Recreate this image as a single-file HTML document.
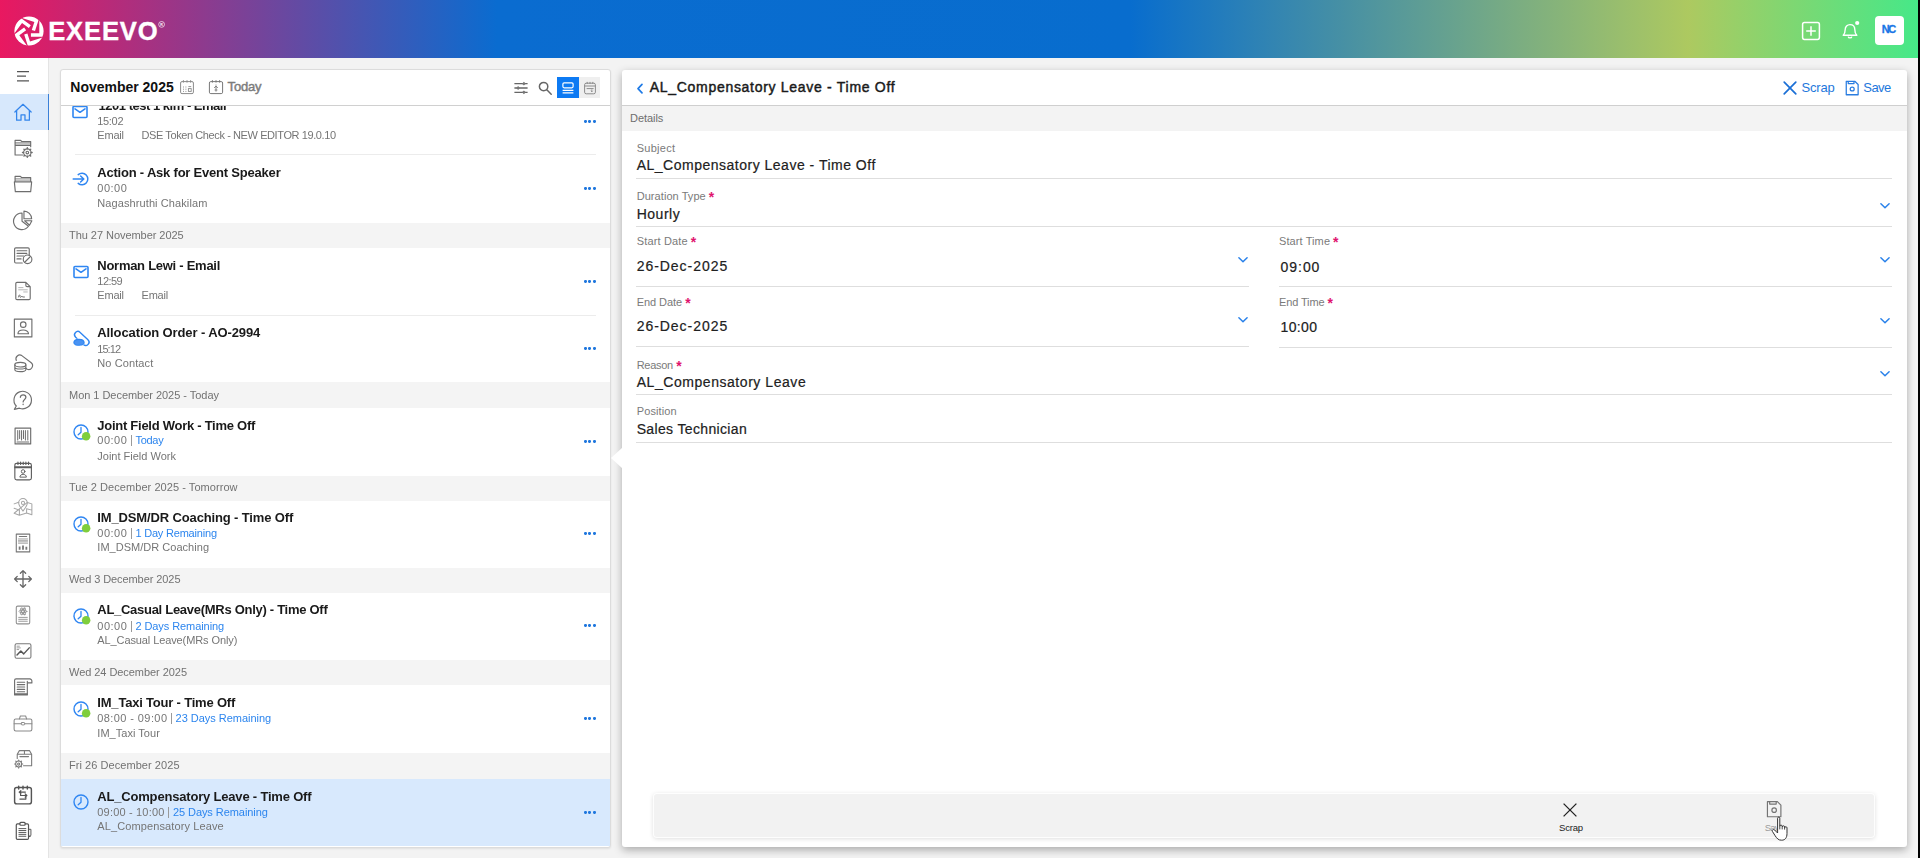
<!DOCTYPE html>
<html><head><meta charset="utf-8"><title>Exeevo</title>
<style>
html,body{margin:0;padding:0;}
body{width:1920px;height:858px;overflow:hidden;background:#f3f3f3;font-family:"Liberation Sans",sans-serif;position:relative;}
.a{position:absolute;}
.t{position:absolute;white-space:pre;}
svg{position:absolute;overflow:visible;}
</style></head><body>
<div class="a" style="left:0;top:0;width:1918px;height:58px;background:linear-gradient(90deg,#e91860 0px,#0a6cd0 497px,#086dce 1130px,#adc960 1688px,#46e888 1918px);"></div>
<div class="a" style="left:1918.00px;top:0.00px;width:2.00px;height:858.00px;background:#000;"></div>
<div class="a" style="left:0.00px;top:58.00px;width:48.00px;height:800.00px;background:#fff;border-right:1px solid #e4e4e4;"></div>
<div class="a" style="left:0.00px;top:94.00px;width:48.00px;height:36.00px;background:#d7e8fc;"></div>
<div class="a" style="left:47.70px;top:94.00px;width:1.50px;height:36.00px;background:#3a80d8;"></div>
<div class="a" style="left:60px;top:69px;width:549px;height:777px;background:#fff;border:1px solid #dcdcdc;border-radius:3px;box-shadow:0 1px 2px rgba(0,0,0,.08);overflow:hidden;"></div>
<div class="a" style="left:61.00px;top:105.00px;width:549.00px;height:1.00px;background:#d0d0d0;"></div>
<div class="a" style="left:622px;top:70px;width:1285px;height:777px;background:#fff;border-radius:3px;box-shadow:0 3px 8px rgba(0,0,0,.30);"></div>
<svg style="left:610px;top:447px" width="13" height="22"><path d="M12.5 0.5 L1 11 L12.5 21.5 Z" fill="#fff"/></svg>
<div class="a" style="left:622.00px;top:105.00px;width:1285.00px;height:1.00px;background:#cfcfcf;"></div>
<div class="a" style="left:622.00px;top:106.00px;width:1285.00px;height:24.50px;background:#f3f3f3;"></div>
<span class="t" style="left:70.30px;top:79.00px;font-size:14.00px;line-height:16px;color:#111;font-weight:bold;letter-spacing:-0.009px;">November 2025</span>
<span class="t" style="left:227.60px;top:79.00px;font-size:13.00px;line-height:15px;color:#7c7c7c;letter-spacing:-0.172px;-webkit-text-stroke:0.45px #7c7c7c;">Today</span>
<div class="a" style="left:557.00px;top:77.00px;width:22.00px;height:21.00px;background:#0d7af3;"></div>
<div class="a" style="left:579.00px;top:77.00px;width:21.00px;height:21.00px;background:#efefef;"></div>
<div class="a" style="left:61px;top:106px;width:549px;height:740px;overflow:hidden;will-change:transform;"><div class="a" style="left:-61px;top:-106px;width:1px;height:1px;">
<span class="t" style="left:98.60px;top:98.00px;font-size:13.00px;line-height:15px;color:#1a1a1a;font-weight:bold;letter-spacing:-0.488px;">1201 test 1 kim - Email</span>
<span class="t" style="left:97.30px;top:115.00px;font-size:11.00px;line-height:12px;color:#757575;letter-spacing:-0.332px;">15:02</span>
<span class="t" style="left:97.30px;top:129.00px;font-size:11.00px;line-height:12px;color:#757575;letter-spacing:-0.201px;">Email</span>
<span class="t" style="left:141.50px;top:129.00px;font-size:11.00px;line-height:12px;color:#757575;letter-spacing:-0.405px;">DSE Token Check - NEW EDITOR 19.0.10</span>
<div class="a" style="left:583.70px;top:120.20px;width:2.90px;height:2.90px;background:#1f77de;border-radius:40%;"></div>
<div class="a" style="left:588.40px;top:120.20px;width:2.90px;height:2.90px;background:#1f77de;border-radius:40%;"></div>
<div class="a" style="left:593.10px;top:120.20px;width:2.90px;height:2.90px;background:#1f77de;border-radius:40%;"></div>
<span class="t" style="left:97.30px;top:165.00px;font-size:13.00px;line-height:15px;color:#1a1a1a;font-weight:bold;letter-spacing:-0.211px;">Action - Ask for Event Speaker</span>
<span class="t" style="left:97.30px;top:182.00px;font-size:11.00px;line-height:12px;color:#757575;letter-spacing:0.493px;">00:00</span>
<span class="t" style="left:97.30px;top:197.00px;font-size:11.00px;line-height:12px;color:#757575;letter-spacing:0.094px;">Nagashruthi Chakilam</span>
<div class="a" style="left:583.70px;top:187.20px;width:2.90px;height:2.90px;background:#1f77de;border-radius:40%;"></div>
<div class="a" style="left:588.40px;top:187.20px;width:2.90px;height:2.90px;background:#1f77de;border-radius:40%;"></div>
<div class="a" style="left:593.10px;top:187.20px;width:2.90px;height:2.90px;background:#1f77de;border-radius:40%;"></div>
<span class="t" style="left:97.30px;top:258.00px;font-size:13.00px;line-height:15px;color:#1a1a1a;font-weight:bold;letter-spacing:-0.270px;">Norman Lewi - Email</span>
<span class="t" style="left:97.30px;top:275.00px;font-size:11.00px;line-height:12px;color:#757575;letter-spacing:-0.532px;">12:59</span>
<span class="t" style="left:97.30px;top:289.00px;font-size:11.00px;line-height:12px;color:#757575;letter-spacing:-0.201px;">Email</span>
<span class="t" style="left:141.50px;top:289.00px;font-size:11.00px;line-height:12px;color:#757575;letter-spacing:-0.201px;">Email</span>
<div class="a" style="left:583.70px;top:280.20px;width:2.90px;height:2.90px;background:#1f77de;border-radius:40%;"></div>
<div class="a" style="left:588.40px;top:280.20px;width:2.90px;height:2.90px;background:#1f77de;border-radius:40%;"></div>
<div class="a" style="left:593.10px;top:280.20px;width:2.90px;height:2.90px;background:#1f77de;border-radius:40%;"></div>
<span class="t" style="left:97.30px;top:325.00px;font-size:13.00px;line-height:15px;color:#1a1a1a;font-weight:bold;letter-spacing:-0.107px;">Allocation Order - AO-2994</span>
<span class="t" style="left:97.30px;top:343.00px;font-size:11.00px;line-height:12px;color:#757575;letter-spacing:-0.957px;">15:12</span>
<span class="t" style="left:97.30px;top:357.00px;font-size:11.00px;line-height:12px;color:#757575;letter-spacing:0.097px;">No Contact</span>
<div class="a" style="left:583.70px;top:347.20px;width:2.90px;height:2.90px;background:#1f77de;border-radius:40%;"></div>
<div class="a" style="left:588.40px;top:347.20px;width:2.90px;height:2.90px;background:#1f77de;border-radius:40%;"></div>
<div class="a" style="left:593.10px;top:347.20px;width:2.90px;height:2.90px;background:#1f77de;border-radius:40%;"></div>
<span class="t" style="left:97.30px;top:418.00px;font-size:13.00px;line-height:15px;color:#1a1a1a;font-weight:bold;letter-spacing:-0.266px;">Joint Field Work - Time Off</span>
<span class="t" style="left:97.30px;top:434.00px;font-size:11.00px;line-height:12px;color:#757575;letter-spacing:0.493px;">00:00</span>
<div class="a" style="left:130.70px;top:434.60px;width:1.10px;height:11.80px;background:#9a9a9a;"></div>
<span class="t" style="left:135.40px;top:434.00px;font-size:11.00px;line-height:12px;color:#2c85ee;letter-spacing:-0.263px;">Today</span>
<span class="t" style="left:97.30px;top:450.00px;font-size:11.00px;line-height:12px;color:#757575;">Joint Field Work</span>
<div class="a" style="left:583.70px;top:440.20px;width:2.90px;height:2.90px;background:#1f77de;border-radius:40%;"></div>
<div class="a" style="left:588.40px;top:440.20px;width:2.90px;height:2.90px;background:#1f77de;border-radius:40%;"></div>
<div class="a" style="left:593.10px;top:440.20px;width:2.90px;height:2.90px;background:#1f77de;border-radius:40%;"></div>
<span class="t" style="left:97.30px;top:510.00px;font-size:13.00px;line-height:15px;color:#1a1a1a;font-weight:bold;letter-spacing:-0.137px;">IM_DSM/DR Coaching - Time Off</span>
<span class="t" style="left:97.30px;top:527.00px;font-size:11.00px;line-height:12px;color:#757575;letter-spacing:0.493px;">00:00</span>
<div class="a" style="left:130.70px;top:527.60px;width:1.10px;height:11.80px;background:#9a9a9a;"></div>
<span class="t" style="left:135.40px;top:527.00px;font-size:11.00px;line-height:12px;color:#2c85ee;letter-spacing:-0.198px;">1 Day Remaining</span>
<span class="t" style="left:97.30px;top:541.00px;font-size:11.00px;line-height:12px;color:#757575;letter-spacing:0.026px;">IM_DSM/DR Coaching</span>
<div class="a" style="left:583.70px;top:532.20px;width:2.90px;height:2.90px;background:#1f77de;border-radius:40%;"></div>
<div class="a" style="left:588.40px;top:532.20px;width:2.90px;height:2.90px;background:#1f77de;border-radius:40%;"></div>
<div class="a" style="left:593.10px;top:532.20px;width:2.90px;height:2.90px;background:#1f77de;border-radius:40%;"></div>
<span class="t" style="left:97.30px;top:602.00px;font-size:13.00px;line-height:15px;color:#1a1a1a;font-weight:bold;letter-spacing:-0.283px;">AL_Casual Leave(MRs Only) - Time Off</span>
<span class="t" style="left:97.30px;top:620.00px;font-size:11.00px;line-height:12px;color:#757575;letter-spacing:0.493px;">00:00</span>
<div class="a" style="left:130.70px;top:620.60px;width:1.10px;height:11.80px;background:#9a9a9a;"></div>
<span class="t" style="left:135.40px;top:620.00px;font-size:11.00px;line-height:12px;color:#2c85ee;letter-spacing:-0.072px;">2 Days Remaining</span>
<span class="t" style="left:97.30px;top:634.00px;font-size:11.00px;line-height:12px;color:#757575;letter-spacing:-0.102px;">AL_Casual Leave(MRs Only)</span>
<div class="a" style="left:583.70px;top:624.20px;width:2.90px;height:2.90px;background:#1f77de;border-radius:40%;"></div>
<div class="a" style="left:588.40px;top:624.20px;width:2.90px;height:2.90px;background:#1f77de;border-radius:40%;"></div>
<div class="a" style="left:593.10px;top:624.20px;width:2.90px;height:2.90px;background:#1f77de;border-radius:40%;"></div>
<span class="t" style="left:97.30px;top:695.00px;font-size:13.00px;line-height:15px;color:#1a1a1a;font-weight:bold;letter-spacing:-0.195px;">IM_Taxi Tour - Time Off</span>
<span class="t" style="left:97.30px;top:712.00px;font-size:11.00px;line-height:12px;color:#757575;letter-spacing:0.406px;">08:00 - 09:00</span>
<div class="a" style="left:170.90px;top:712.60px;width:1.10px;height:11.80px;background:#9a9a9a;"></div>
<span class="t" style="left:175.60px;top:712.00px;font-size:11.00px;line-height:12px;color:#2c85ee;letter-spacing:-0.031px;">23 Days Remaining</span>
<span class="t" style="left:97.30px;top:727.00px;font-size:11.00px;line-height:12px;color:#757575;letter-spacing:0.031px;">IM_Taxi Tour</span>
<div class="a" style="left:583.70px;top:717.20px;width:2.90px;height:2.90px;background:#1f77de;border-radius:40%;"></div>
<div class="a" style="left:588.40px;top:717.20px;width:2.90px;height:2.90px;background:#1f77de;border-radius:40%;"></div>
<div class="a" style="left:593.10px;top:717.20px;width:2.90px;height:2.90px;background:#1f77de;border-radius:40%;"></div>
<div class="a" style="left:61.00px;top:778.80px;width:549.00px;height:68.00px;background:#d8e9fd;"></div>
<span class="t" style="left:97.30px;top:789.00px;font-size:13.00px;line-height:15px;color:#1a1a1a;font-weight:bold;letter-spacing:-0.187px;">AL_Compensatory Leave - Time Off</span>
<span class="t" style="left:97.30px;top:806.00px;font-size:11.00px;line-height:12px;color:#757575;letter-spacing:0.181px;">09:00 - 10:00</span>
<div class="a" style="left:168.20px;top:806.60px;width:1.10px;height:11.80px;background:#9a9a9a;"></div>
<span class="t" style="left:172.90px;top:806.00px;font-size:11.00px;line-height:12px;color:#2c85ee;letter-spacing:-0.062px;">25 Days Remaining</span>
<span class="t" style="left:97.30px;top:820.00px;font-size:11.00px;line-height:12px;color:#757575;letter-spacing:0.113px;">AL_Compensatory Leave</span>
<div class="a" style="left:583.70px;top:811.20px;width:2.90px;height:2.90px;background:#1f77de;border-radius:40%;"></div>
<div class="a" style="left:588.40px;top:811.20px;width:2.90px;height:2.90px;background:#1f77de;border-radius:40%;"></div>
<div class="a" style="left:593.10px;top:811.20px;width:2.90px;height:2.90px;background:#1f77de;border-radius:40%;"></div>
<div class="a" style="left:61.00px;top:222.60px;width:549.00px;height:25.40px;background:#f4f4f4;"></div>
<span class="t" style="left:69.00px;top:229.00px;font-size:11.00px;line-height:12px;color:#727272;letter-spacing:-0.046px;">Thu 27 November 2025</span>
<div class="a" style="left:61.00px;top:382.40px;width:549.00px;height:25.70px;background:#f4f4f4;"></div>
<span class="t" style="left:69.00px;top:389.00px;font-size:11.00px;line-height:12px;color:#727272;letter-spacing:-0.032px;">Mon 1 December 2025 - Today</span>
<div class="a" style="left:61.00px;top:475.80px;width:549.00px;height:24.80px;background:#f4f4f4;"></div>
<span class="t" style="left:69.00px;top:481.00px;font-size:11.00px;line-height:12px;color:#727272;letter-spacing:0.055px;">Tue 2 December 2025 - Tomorrow</span>
<div class="a" style="left:61.00px;top:567.50px;width:549.00px;height:25.30px;background:#f4f4f4;"></div>
<span class="t" style="left:69.00px;top:573.00px;font-size:11.00px;line-height:12px;color:#727272;letter-spacing:-0.079px;">Wed 3 December 2025</span>
<div class="a" style="left:61.00px;top:660.20px;width:549.00px;height:25.20px;background:#f4f4f4;"></div>
<span class="t" style="left:69.00px;top:666.00px;font-size:11.00px;line-height:12px;color:#727272;letter-spacing:-0.054px;">Wed 24 December 2025</span>
<div class="a" style="left:61.00px;top:752.60px;width:549.00px;height:26.30px;background:#f4f4f4;"></div>
<span class="t" style="left:69.00px;top:759.00px;font-size:11.00px;line-height:12px;color:#727272;letter-spacing:0.056px;">Fri 26 December 2025</span>
<div class="a" style="left:75.00px;top:154.00px;width:521.00px;height:1.00px;background:#ececec;"></div>
<div class="a" style="left:75.00px;top:315.00px;width:521.00px;height:1.00px;background:#ececec;"></div>
</div></div>
<span class="t" style="left:649.70px;top:79.00px;font-size:14.00px;line-height:16px;color:#1a1a1a;letter-spacing:0.707px;-webkit-text-stroke:0.45px #1a1a1a;">AL_Compensatory Leave - Time Off</span>
<span class="t" style="left:1801.50px;top:80.00px;font-size:13.00px;line-height:15px;color:#1e78dc;letter-spacing:-0.190px;">Scrap</span>
<span class="t" style="left:1863.30px;top:80.00px;font-size:13.00px;line-height:15px;color:#1e78dc;letter-spacing:-0.544px;">Save</span>
<span class="t" style="left:630.00px;top:112.00px;font-size:11.00px;line-height:12px;color:#6e6e6e;letter-spacing:-0.054px;">Details</span>
<span class="t" style="left:636.70px;top:142.00px;font-size:11.00px;line-height:12px;color:#7a7a7a;letter-spacing:0.268px;">Subject</span>
<span class="t" style="left:636.70px;top:157.00px;font-size:14.00px;line-height:16px;color:#212121;letter-spacing:0.501px;-webkit-text-stroke:0.2px #212121;">AL_Compensatory Leave - Time Off</span>
<span class="t" style="left:636.70px;top:190.00px;font-size:11.00px;line-height:12px;color:#7a7a7a;letter-spacing:0.060px;">Duration Type</span>
<span class="t" style="left:708.70px;top:189.00px;font-size:14.00px;line-height:16px;color:#e0146e;font-weight:bold;">*</span>
<span class="t" style="left:636.70px;top:206.00px;font-size:14.00px;line-height:16px;color:#212121;letter-spacing:0.509px;-webkit-text-stroke:0.2px #212121;">Hourly</span>
<span class="t" style="left:636.70px;top:235.00px;font-size:11.00px;line-height:12px;color:#7a7a7a;letter-spacing:0.164px;">Start Date</span>
<span class="t" style="left:690.70px;top:234.00px;font-size:14.00px;line-height:16px;color:#e0146e;font-weight:bold;">*</span>
<span class="t" style="left:636.70px;top:258.00px;font-size:14.00px;line-height:16px;color:#212121;letter-spacing:0.956px;-webkit-text-stroke:0.2px #212121;">26-Dec-2025</span>
<span class="t" style="left:1279.00px;top:235.00px;font-size:11.00px;line-height:12px;color:#7a7a7a;letter-spacing:0.097px;">Start Time</span>
<span class="t" style="left:1333.00px;top:234.00px;font-size:14.00px;line-height:16px;color:#e0146e;font-weight:bold;">*</span>
<span class="t" style="left:1280.60px;top:259.00px;font-size:14.00px;line-height:16px;color:#212121;letter-spacing:0.941px;-webkit-text-stroke:0.2px #212121;">09:00</span>
<span class="t" style="left:636.70px;top:296.00px;font-size:11.00px;line-height:12px;color:#7a7a7a;letter-spacing:-0.052px;">End Date</span>
<span class="t" style="left:685.20px;top:295.00px;font-size:14.00px;line-height:16px;color:#e0146e;font-weight:bold;">*</span>
<span class="t" style="left:636.70px;top:318.00px;font-size:14.00px;line-height:16px;color:#212121;letter-spacing:0.956px;-webkit-text-stroke:0.2px #212121;">26-Dec-2025</span>
<span class="t" style="left:1279.00px;top:296.00px;font-size:11.00px;line-height:12px;color:#7a7a7a;letter-spacing:-0.124px;">End Time</span>
<span class="t" style="left:1327.60px;top:295.00px;font-size:14.00px;line-height:16px;color:#e0146e;font-weight:bold;">*</span>
<span class="t" style="left:1280.60px;top:319.00px;font-size:14.00px;line-height:16px;color:#212121;letter-spacing:0.341px;-webkit-text-stroke:0.2px #212121;">10:00</span>
<span class="t" style="left:636.70px;top:359.00px;font-size:11.00px;line-height:12px;color:#7a7a7a;letter-spacing:-0.283px;">Reason</span>
<span class="t" style="left:676.20px;top:358.00px;font-size:14.00px;line-height:16px;color:#e0146e;font-weight:bold;">*</span>
<span class="t" style="left:636.70px;top:374.00px;font-size:14.00px;line-height:16px;color:#212121;letter-spacing:0.551px;-webkit-text-stroke:0.2px #212121;">AL_Compensatory Leave</span>
<span class="t" style="left:636.70px;top:405.00px;font-size:11.00px;line-height:12px;color:#7a7a7a;letter-spacing:0.124px;">Position</span>
<span class="t" style="left:636.70px;top:421.00px;font-size:14.00px;line-height:16px;color:#212121;letter-spacing:0.346px;-webkit-text-stroke:0.2px #212121;">Sales Technician</span>
<div class="a" style="left:636.00px;top:178.00px;width:1256.00px;height:1.00px;background:#dedede;"></div>
<div class="a" style="left:636.00px;top:226.00px;width:1256.00px;height:1.00px;background:#dedede;"></div>
<div class="a" style="left:636.00px;top:286.00px;width:613.00px;height:1.00px;background:#dedede;"></div>
<div class="a" style="left:1279.00px;top:286.00px;width:613.00px;height:1.00px;background:#dedede;"></div>
<div class="a" style="left:636.00px;top:346.00px;width:613.00px;height:1.00px;background:#dedede;"></div>
<div class="a" style="left:1279.00px;top:346.50px;width:613.00px;height:1.00px;background:#dedede;"></div>
<div class="a" style="left:636.00px;top:394.00px;width:1256.00px;height:1.00px;background:#dedede;"></div>
<div class="a" style="left:636.00px;top:442.00px;width:1256.00px;height:1.00px;background:#dedede;"></div>
<svg style="left:1879.10px;top:202.30px" width="12" height="8"><path d="M1.9 1.7 L6 5.7 L10.1 1.7" fill="none" stroke="#2a82ea" stroke-width="1.5" stroke-linecap="round" stroke-linejoin="round"/></svg>
<svg style="left:1237.00px;top:256.20px" width="12" height="8"><path d="M1.9 1.7 L6 5.7 L10.1 1.7" fill="none" stroke="#2a82ea" stroke-width="1.5" stroke-linecap="round" stroke-linejoin="round"/></svg>
<svg style="left:1879.10px;top:256.20px" width="12" height="8"><path d="M1.9 1.7 L6 5.7 L10.1 1.7" fill="none" stroke="#2a82ea" stroke-width="1.5" stroke-linecap="round" stroke-linejoin="round"/></svg>
<svg style="left:1237.00px;top:316.20px" width="12" height="8"><path d="M1.9 1.7 L6 5.7 L10.1 1.7" fill="none" stroke="#2a82ea" stroke-width="1.5" stroke-linecap="round" stroke-linejoin="round"/></svg>
<svg style="left:1879.10px;top:316.80px" width="12" height="8"><path d="M1.9 1.7 L6 5.7 L10.1 1.7" fill="none" stroke="#2a82ea" stroke-width="1.5" stroke-linecap="round" stroke-linejoin="round"/></svg>
<svg style="left:1879.10px;top:370.40px" width="12" height="8"><path d="M1.9 1.7 L6 5.7 L10.1 1.7" fill="none" stroke="#2a82ea" stroke-width="1.5" stroke-linecap="round" stroke-linejoin="round"/></svg>
<div class="a" style="left:654px;top:793.5px;width:1220px;height:43.5px;background:#f2f2f2;border-radius:3px;box-shadow:0 0 0 1px rgba(255,255,255,.9),0 1px 4px 1px rgba(0,0,0,.13);"></div>
<span class="t" style="left:1559.00px;top:822.00px;font-size:9.50px;line-height:11px;color:#222;letter-spacing:-0.204px;">Scrap</span>
<span class="t" style="left:1764.80px;top:822.00px;font-size:9.50px;line-height:11px;color:#9a9a9a;letter-spacing:-0.884px;">Save</span>
<svg style="left:12.60px;top:14.50px" width="32" height="32" viewBox="-16 -16 32 32"><defs><clipPath id="lc"><circle cx="0" cy="0" r="14.6"/></clipPath></defs><g clip-path="url(#lc)" fill="#fff"><path transform="rotate(0)" d="M10.3 -14 H15 V5.7 H1.9 V2.3 H10.3 Z"/><path transform="rotate(72)" d="M10.3 -14 H15 V5.7 H1.9 V2.3 H10.3 Z"/><path transform="rotate(144)" d="M10.3 -14 H15 V5.7 H1.9 V2.3 H10.3 Z"/><path transform="rotate(216)" d="M10.3 -14 H15 V5.7 H1.9 V2.3 H10.3 Z"/><path transform="rotate(288)" d="M10.3 -14 H15 V5.7 H1.9 V2.3 H10.3 Z"/></g></svg>
<span class="t" style="left:48.20px;top:17.00px;font-size:25.60px;line-height:28px;color:#fff;font-weight:bold;letter-spacing:0.848px;-webkit-text-stroke:0.35px #fff;">EXEEVO</span>
<svg style="left:158.2px;top:21.4px" width="8" height="8" viewBox="0 0 8 8"><circle cx="3.6" cy="3.4" r="2.9" fill="none" stroke="#fff" stroke-width="0.8" opacity=".85"/><text x="3.6" y="5" font-size="3.6" text-anchor="middle" fill="#fff" font-family="Liberation Sans" font-weight="bold">R</text></svg>
<svg style="left:1800.80px;top:20.50px;" width="20" height="20" viewBox="0 0 20 20"><rect x="1.6" y="1.6" width="16.8" height="16.8" rx="1.8" fill="none" stroke="#fff" stroke-width="1.5"/><path d="M10 5.2 V14.8 M5.2 10 H14.8" stroke="#fff" stroke-width="1.5"/></svg>
<svg style="left:1839.50px;top:20.50px;" width="20" height="20" viewBox="0 0 20 20"><path d="M3.2 14.2 C5 12.6 5.2 11 5.2 8.6 C5.2 5.6 7.2 3.6 10 3.6 C12.8 3.6 14.8 5.6 14.8 8.6 C14.8 11 15 12.6 16.8 14.2 Z" fill="none" stroke="#fff" stroke-width="1.4" stroke-linejoin="round"/><path d="M8.2 15.6 C8.4 17.4 11.6 17.4 11.8 15.6" fill="none" stroke="#fff" stroke-width="1.3"/><circle cx="17.2" cy="2" r="2.1" fill="#fff"/></svg>
<div class="a" style="left:1875.00px;top:16.20px;width:28.80px;height:28.60px;background:#fff;border-radius:4px;"></div>
<span class="t" style="left:1881.80px;top:23.00px;font-size:11.00px;line-height:12px;color:#1a76e6;font-weight:bold;letter-spacing:-1.488px;-webkit-text-stroke:0.3px #1a76e6;">NC</span>
<svg style="left:16px;top:70px" width="16" height="13"><path d="M1 1.6 H13 M1 6.2 H10 M1 10.8 H13" stroke="#555" stroke-width="1.2" fill="none"/></svg>
<svg style="left:12.20px;top:100.90px" width="22" height="22" viewBox="0 0 20 20"><g fill="none" stroke="#3385ec" stroke-width="1.15" stroke-linecap="round" stroke-linejoin="round"><path d="M2.6 10.0 L10 3 L17.4 10.0 M4.2 8.6 V17.4 H8.2 V12.6 H11.8 V17.4 H15.8 V8.6"/></g></svg>
<svg style="left:11.20px;top:135.80px" width="24" height="24" viewBox="0 0 20 20"><g fill="none" stroke="#6e6e6e" stroke-width="0.95" stroke-linecap="round" stroke-linejoin="round"><path d="M3.4 5 V3.6 H8 L9 4.6 H16.4 V9 M3.4 5 V15.8 H9.6 M3.4 7.8 H16.4"/><path d="M3.6 5.5 H16.2 M3.6 6.6 H16.2" stroke-width=".55"/><circle cx="13.6" cy="13.8" r="3.1"/><circle cx="13.6" cy="13.8" r="1.1"/><path d="M13.6 9.8 V10.7 M13.6 16.9 V17.8 M9.6 13.8 H10.5 M16.7 13.8 H17.6 M10.8 11 L11.4 11.6 M15.8 16 L16.4 16.6 M16.4 11 L15.8 11.6 M11.4 16 L10.8 16.6" stroke-width="1.2"/></g></svg>
<svg style="left:11.20px;top:172.00px" width="24" height="24" viewBox="0 0 20 20"><g fill="none" stroke="#6e6e6e" stroke-width="0.95" stroke-linecap="round" stroke-linejoin="round"><path d="M3.4 7.4 V3.6 H7.8 L8.8 4.6 H16.4 V7.4 M2.8 8.2 H17.2 L16.4 16.4 H3.6 Z"/><path d="M3.6 5.6 H16.2 M3.6 6.8 H16.2" stroke-width=".55"/></g></svg>
<svg style="left:11.20px;top:208.40px" width="24" height="24" viewBox="0 0 20 20"><g fill="none" stroke="#6e6e6e" stroke-width="0.95" stroke-linecap="round" stroke-linejoin="round"><path d="M9.2 4.2 A6.9 6.9 0 1 0 14.6 15.2 L9.2 11.1 Z"/><path d="M10.8 2.6 A6.6 6.6 0 0 1 17.2 9 H10.8 Z"/><path d="M11.4 10.6 H17.4 L15.4 14.4 Z"/></g></svg>
<svg style="left:11.20px;top:243.60px" width="24" height="24" viewBox="0 0 20 20"><g fill="none" stroke="#6e6e6e" stroke-width="0.95" stroke-linecap="round" stroke-linejoin="round"><path d="M15.2 9.6 V4.2 Q15.2 3.2 14.2 3.2 H4 Q3 3.2 3 4.2 V14.8 Q3 15.8 4 15.8 H9.4"/><path d="M5 5.6 H13.2 M5 7.8 H13.2 M5 10 H10.6 M5 12.4 H8.4"/><circle cx="13.8" cy="12.8" r="3.6"/><path d="M11.4 15.2 L16.2 10.4"/></g></svg>
<svg style="left:11.20px;top:279.40px" width="24" height="24" viewBox="0 0 20 20"><g fill="none" stroke="#6e6e6e" stroke-width="0.95" stroke-linecap="round" stroke-linejoin="round"><path d="M5 2.8 H12.4 L16 6.4 V16.2 Q16 17.2 15 17.2 H5 Q4 17.2 4 16.2 V3.8 Q4 2.8 5 2.8 Z M12.4 2.8 V5.4 Q12.4 6.4 13.4 6.4 H16"/><path d="M6.4 7.2 H10 M6.4 9 H13.6 M10.6 10.8 H13.6" stroke-width=".6" stroke="#999"/><path d="M6.2 15 C6.6 12.6 8 12.8 7.4 14.4 C7 15.6 8.6 15.4 9 14.2 L9.6 15 H11.2" stroke-width=".8"/></g></svg>
<svg style="left:11.20px;top:315.60px" width="24" height="24" viewBox="0 0 20 20"><g fill="none" stroke="#6e6e6e" stroke-width="0.95" stroke-linecap="round" stroke-linejoin="round"><rect x="2.8" y="2.6" width="14.6" height="14.8"/><circle cx="10.2" cy="7.2" r="2.3"/><path d="M5.8 14.8 C5.8 10.6 14.6 10.6 14.6 14.8 Z"/></g></svg>
<svg style="left:11.20px;top:351.60px" width="24" height="24" viewBox="0 0 20 20"><g fill="none" stroke="#6e6e6e" stroke-width="0.95" stroke-linecap="round" stroke-linejoin="round"><path d="M4.4 7 A3.2 3.2 0 0 1 9 3 L16.6 8.8 A3.2 3.2 0 0 1 13.2 14.2 L12.4 13.6"/><ellipse cx="7.8" cy="10.6" rx="4.6" ry="1.9"/><path d="M3.2 10.6 V14.6 C3.2 17 12.4 17 12.4 14.6 V10.6 M3.2 12.4 C3.2 14.8 12.4 14.8 12.4 12.4"/></g></svg>
<svg style="left:11.20px;top:387.60px" width="24" height="24" viewBox="0 0 20 20"><g fill="none" stroke="#6e6e6e" stroke-width="0.95" stroke-linecap="round" stroke-linejoin="round"><path d="M4.4 15 A7.3 7.3 0 1 1 7 16.8 L2.8 17.8 Z"/><path d="M7.8 7.8 C7.8 5 12.4 5 12.4 7.8 C12.4 9.6 10.1 9.4 10.1 11.6 M10.1 13.4 V13.8" stroke-width="1.05"/></g></svg>
<svg style="left:11.20px;top:423.80px" width="24" height="24" viewBox="0 0 20 20"><g fill="none" stroke="#6e6e6e" stroke-width="0.95" stroke-linecap="round" stroke-linejoin="round"><rect x="3.4" y="3.4" width="13" height="13.2"/><path d="M5.6 5.4 V13.4 M7.2 5.4 V12 M8.8 5.4 V13.4 M10.4 5.4 V12 M12 5.4 V13.4 M14 5.4 V13.4 M5 15 H14.8" stroke-width=".85"/></g></svg>
<svg style="left:11.20px;top:459.20px" width="24" height="24" viewBox="0 0 20 20"><g fill="none" stroke="#5e5e5e" stroke-width="0.95" stroke-linecap="round" stroke-linejoin="round"><rect x="3.2" y="3.6" width="13.8" height="13.8" rx="1.6"/><path d="M3.2 6.6 H17 M3.2 7.2 H17 M5.8 2.6 V4.6 M8 2.6 V4.6 M10.2 2.6 V4.6 M12.4 2.6 V4.6 M14.6 2.6 V4.6"/><circle cx="10.1" cy="10.4" r="1.5" stroke-width=".8"/><path d="M7.4 14.8 C7.4 12 12.8 12 12.8 14.8 Z" stroke-width=".8"/></g></svg>
<svg style="left:11.20px;top:495.20px" width="24" height="24" viewBox="0 0 20 20"><g fill="none" stroke="#a6a6a6" stroke-width="0.85" stroke-linecap="round" stroke-linejoin="round"><path d="M2.6 7.4 L6.4 6 M13.6 6.2 L17.4 7.4 V16.4 L13 15 L7 16.8 L2.6 15.2 Z M7 12 V16.8 M13 12 V15 M2.6 11 L7 12.6 M13 11.4 L17.4 12.6"/><path d="M10 13.4 C7.4 10 6.4 8.6 6.4 6.6 A3.6 3.6 0 0 1 13.6 6.6 C13.6 8.6 12.6 10 10 13.4 Z"/><circle cx="10" cy="6.6" r="1.3"/></g></svg>
<svg style="left:11.20px;top:531.30px" width="24" height="24" viewBox="0 0 20 20"><g fill="none" stroke="#777" stroke-width="0.9" stroke-linecap="round" stroke-linejoin="round"><rect x="4.4" y="2.6" width="11.2" height="14.8"/><path d="M7 4.6 H13" stroke-width="1"/><path d="M6.2 6.6 H13.8 M6.2 7.8 H13.8 M6.2 9 H13.8 M6.2 10.2 H13.8" stroke-width=".6" stroke="#888"/><path d="M7.2 15.6 V13 M10 15.6 V12 M12.8 15.6 V13.2" stroke-width="1.5" stroke-linecap="butt"/></g></svg>
<svg style="left:11.20px;top:567.20px" width="24" height="24" viewBox="0 0 20 20"><g fill="none" stroke="#666" stroke-width="1.1" stroke-linecap="round" stroke-linejoin="round"><path d="M10 3 V17 M3 10 H17 M7.8 5.2 L10 3 L12.2 5.2 M7.8 14.8 L10 17 L12.2 14.8 M5.2 7.8 L3 10 L5.2 12.2 M14.8 7.8 L17 10 L14.8 12.2"/></g></svg>
<svg style="left:11.20px;top:603.00px" width="24" height="24" viewBox="0 0 20 20"><g fill="none" stroke="#909090" stroke-width="0.9" stroke-linecap="round" stroke-linejoin="round"><rect x="4.4" y="2.6" width="11.2" height="14.8" rx="1.2"/><circle cx="10" cy="7" r="1.1" stroke-width=".7"/><ellipse cx="10" cy="7" rx="3.3" ry="1.4" stroke-width=".7"/><ellipse cx="10" cy="7" rx="3.3" ry="1.4" transform="rotate(60 10 7)" stroke-width=".7"/><ellipse cx="10" cy="7" rx="3.3" ry="1.4" transform="rotate(-60 10 7)" stroke-width=".7"/><path d="M6.4 12 H13.6 M6.4 13.6 H13.6 M6.4 15.2 H13.6" stroke-width=".75"/></g></svg>
<svg style="left:11.20px;top:639.20px" width="24" height="24" viewBox="0 0 20 20"><g fill="none" stroke="#7a7a7a" stroke-width="0.9" stroke-linecap="round" stroke-linejoin="round"><rect x="3.4" y="4" width="13.2" height="12" rx="1.2"/><path d="M5 13.4 L8.2 10 L10.6 12.4 L15.2 7.4" stroke="#555" stroke-width="1.2"/><path d="M5 6 H7 M5 7.4 H7.8 M5 8.8 H6.4" stroke-width=".6"/></g></svg>
<svg style="left:11.20px;top:675.00px" width="24" height="24" viewBox="0 0 20 20"><g fill="none" stroke="#6e6e6e" stroke-width="0.95" stroke-linecap="round" stroke-linejoin="round"><path d="M13.6 5.2 V16.6 H3 V4.4 Q3 3.2 4.2 3.2 H15.6 A1.9 1.9 0 0 1 17.4 5.2 V6.6 H13.6"/><path d="M3.2 16 H13.4" stroke-width="1.4"/><path d="M5.2 6 H11.4 M5.2 8 H11.4 M5.2 10 H11.4 M5.2 12 H11.4 M5.2 14 H11.4" stroke-width=".9"/></g></svg>
<svg style="left:11.20px;top:710.60px" width="24" height="24" viewBox="0 0 20 20"><g fill="none" stroke="#8a8a8a" stroke-width="0.9" stroke-linecap="round" stroke-linejoin="round"><rect x="2.6" y="6.6" width="14.8" height="10" rx="1.4"/><path d="M7 6.6 L7.8 4.2 H12.2 L13 6.6 M2.6 10.6 H8.6 M11.4 10.6 H17.4"/><rect x="8.6" y="9.6" width="2.8" height="2" rx=".6" stroke-width=".8"/></g></svg>
<svg style="left:11.20px;top:746.80px" width="24" height="24" viewBox="0 0 20 20"><g fill="none" stroke="#7a7a7a" stroke-width="0.9" stroke-linecap="round" stroke-linejoin="round"><path d="M5.2 9.6 V6 L7 3 H15.4 L17.2 6 V15.6 H10.4 M5.2 6 H17.2 M11.2 3 V6 M7.4 8 H14.6"/><circle cx="6.4" cy="14.2" r="2.5"/><circle cx="6.4" cy="14.2" r=".9"/><path d="M6.4 10.8 V11.5 M6.4 16.9 V17.6 M3 14.2 H3.7 M9.1 14.2 H9.8 M4 11.8 L4.5 12.3 M8.3 16.1 L8.8 16.6 M8.8 11.8 L8.3 12.3 M4.5 16.1 L4 16.6"/></g></svg>
<svg style="left:11.20px;top:783.20px" width="24" height="24" viewBox="0 0 20 20"><g fill="none" stroke="#555" stroke-width="1.2" stroke-linecap="round" stroke-linejoin="round"><rect x="3" y="3.8" width="14" height="13.6" rx="1.8"/><path d="M6.4 2.6 V5 M10 2.6 V5 M13.6 2.6 V5"/><path d="M8 7.6 V10.4 H13.2 M11.8 9 L13.2 10.4 L11.8 11.8 M12.4 13.2 V10.4 M6.8 7.6 H12 M8.2 6.4 L6.8 7.6 L8.2 8.8 M7.4 13.4 H12.4" stroke-width="1.0"/></g></svg>
<svg style="left:11.20px;top:819.00px" width="24" height="24" viewBox="0 0 20 20"><g fill="none" stroke="#555" stroke-width="1" stroke-linecap="round" stroke-linejoin="round"><path d="M7.4 4 H5.4 Q4.4 4 4.4 5 V16 Q4.4 17 5.4 17 H13.6 Q14.6 17 14.6 16 V5 Q14.6 4 13.6 4 H11.8"/><rect x="7.4" y="2.8" width="4.4" height="2.4" rx=".8"/><path d="M6.6 8 H12.4 M6.6 9.6 H12.4 M6.6 11.2 H12.4 M6.6 12.8 H12.4 M6.6 14.4 H12.4" stroke-width=".8"/><path d="M14.8 8.6 H16.6 V13.4 L15.7 15 L14.8 13.4" stroke-width=".8"/></g></svg>
<svg style="left:179.00px;top:79.00px;" width="16" height="16" viewBox="0 0 16 16"><g fill="none" stroke="#8a8a8a" stroke-width="1"><rect x="1.6" y="2.6" width="12.8" height="12" rx="1.4"/><path d="M4.4 1.2 V3.6 M8 1.2 V3.6 M11.6 1.2 V3.6"/><path d="M4 8 H5 M6.4 8 H7.4 M4 10.2 H5 M6.4 10.2 H7.4 M4 12.4 H5 M6.4 12.4 H7.4" stroke-width=".9"/><rect x="9.4" y="9.6" width="2.8" height="2.8" stroke-width=".9"/><path d="M9.4 7.6 L12.2 7.6" stroke-width=".9"/></g></svg>
<svg style="left:207.80px;top:79.00px;" width="16" height="16" viewBox="0 0 16 16"><g fill="none" stroke="#777" stroke-width="1"><rect x="1.4" y="2.6" width="13.2" height="12" rx="1.4"/><path d="M4.4 1.2 V3.6 M8 1.2 V3.6 M11.6 1.2 V3.6"/><path d="M8 12.6 V7.4 M6.2 9 L8 7 L9.8 9 M6.6 11 H9.4" stroke-width=".9"/><circle cx="8" cy="6" r=".6" fill="#777" stroke="none"/></g></svg>
<svg style="left:512.70px;top:81.20px;" width="16" height="14" viewBox="0 0 16 14"><g fill="none" stroke="#666" stroke-width="1.3"><path d="M1.4 2.7 H14.6 M1.4 7 H14.6 M1.4 11.3 H14.6"/><path d="M9 2.7 L10.9 0.8 L12.8 2.7 L10.9 4.6 Z M3.2 7 L5.1 5.1 L7 7 L5.1 8.9 Z M9 11.3 L10.9 9.4 L12.8 11.3 L10.9 13.2 Z" fill="#777" stroke="none"/></g></svg>
<svg style="left:537.40px;top:80.00px;" width="16" height="16" viewBox="0 0 16 16"><g fill="none" stroke="#666" stroke-width="1.5"><circle cx="6.6" cy="6.6" r="4.2"/><path d="M9.8 9.8 L14.2 14.2" stroke-linecap="round"/></g></svg>
<svg style="left:560.20px;top:79.60px;" width="16" height="16" viewBox="0 0 16 16"><g fill="none" stroke="#fff"><rect x="2.9" y="2.8" width="10.2" height="5" rx="1.2" stroke-width="1.2"/><path d="M2.6 10.4 H13.4 M2.6 12.9 H13.4" stroke-width="1.1"/></g></svg>
<svg style="left:582.30px;top:80.30px;" width="16" height="16" viewBox="0 0 16 16"><g fill="none" stroke="#8c8c8c" stroke-width="1"><rect x="2.6" y="3.2" width="10.8" height="10.6" rx="1.6"/><path d="M2.6 6 H13.4 M5.2 1.9 V4 M8 1.9 V4 M10.8 1.9 V4 M4.6 8.6 H11.6" /><path d="M9.8 9.4 V11.8 M8.8 10.8 L9.8 11.8 L10.8 10.8" stroke-width=".9"/></g></svg>
<div class="a" style="left:61px;top:106px;width:60px;height:30px;overflow:hidden;"><div class="a" style="left:-61px;top:-106px;">
<svg style="left:71.40px;top:104.50px;" width="18" height="14" viewBox="0 0 18 14"><g fill="none" stroke="#2f86f2" stroke-width="1.6" stroke-linejoin="round"><rect x="2" y="1.5" width="14" height="11" rx="1"/><path d="M4 3.9 L9 7.3 L14 3.9" stroke-linecap="round"/></g></svg>
</div></div>
<svg style="left:71.60px;top:170.60px;" width="18" height="16" viewBox="0 0 18 16"><g fill="none" stroke="#2f86f2" stroke-width="1.5" stroke-linecap="round" stroke-linejoin="round"><path d="M6.2 3.6 A5.8 5.8 0 1 1 6.2 12.4"/><path d="M1.2 8 H11.6 M8.6 5 L11.8 8 L8.6 11"/></g></svg>
<svg style="left:71.50px;top:264.70px;" width="18" height="14" viewBox="0 0 18 14"><g fill="none" stroke="#2f86f2" stroke-width="1.6" stroke-linejoin="round"><rect x="2" y="1.5" width="14" height="11" rx="1"/><path d="M4 3.9 L9 7.3 L14 3.9" stroke-linecap="round"/></g></svg>
<svg style="left:71.60px;top:329.70px;" width="18" height="18" viewBox="0 0 18 18"><path d="M5.9 4.8 L13.7 12.1" stroke="#2f86f2" stroke-width="8.0" stroke-linecap="round" fill="none"/><path d="M5.9 4.8 L13.7 12.1" stroke="#fff" stroke-width="5.2" stroke-linecap="round" fill="none"/><path d="M1.4 12.8 C1.4 7.6 12.6 7.6 12.6 12.8 C12.6 16.6 1.4 16.6 1.4 12.8 Z" fill="#4a93f2" stroke="#fff" stroke-width="1"/><path d="M1.9 12.8 C1.9 8.2 12.1 8.2 12.1 12.8 C12.1 16.1 1.9 16.1 1.9 12.8 Z" fill="#4a93f2" stroke="#2f86f2" stroke-width="1.1"/></svg>
<svg style="left:71.55px;top:422.60px;" width="18" height="18" viewBox="0 0 18 18"><circle cx="9" cy="9" r="7.0" fill="none" stroke="#2f86f2" stroke-width="1.4"/><path d="M9 4.4 V9.2 L6.2 11.8" fill="none" stroke="#2f86f2" stroke-width="1.3" stroke-linecap="round" stroke-linejoin="round"/><circle cx="14.15" cy="13.25" r="4.25" fill="#7fce3c"/></svg>
<svg style="left:71.55px;top:514.60px;" width="18" height="18" viewBox="0 0 18 18"><circle cx="9" cy="9" r="7.0" fill="none" stroke="#2f86f2" stroke-width="1.4"/><path d="M9 4.4 V9.2 L6.2 11.8" fill="none" stroke="#2f86f2" stroke-width="1.3" stroke-linecap="round" stroke-linejoin="round"/><circle cx="14.15" cy="13.25" r="4.25" fill="#7fce3c"/></svg>
<svg style="left:71.55px;top:606.60px;" width="18" height="18" viewBox="0 0 18 18"><circle cx="9" cy="9" r="7.0" fill="none" stroke="#2f86f2" stroke-width="1.4"/><path d="M9 4.4 V9.2 L6.2 11.8" fill="none" stroke="#2f86f2" stroke-width="1.3" stroke-linecap="round" stroke-linejoin="round"/><circle cx="14.15" cy="13.25" r="4.25" fill="#7fce3c"/></svg>
<svg style="left:71.55px;top:699.60px;" width="18" height="18" viewBox="0 0 18 18"><circle cx="9" cy="9" r="7.0" fill="none" stroke="#2f86f2" stroke-width="1.4"/><path d="M9 4.4 V9.2 L6.2 11.8" fill="none" stroke="#2f86f2" stroke-width="1.3" stroke-linecap="round" stroke-linejoin="round"/><circle cx="14.15" cy="13.25" r="4.25" fill="#7fce3c"/></svg>
<svg style="left:71.55px;top:793.20px;" width="18" height="18" viewBox="0 0 18 18"><circle cx="9" cy="9" r="7.0" fill="none" stroke="#2f86f2" stroke-width="1.4"/><path d="M9 4.4 V9.2 L6.2 11.8" fill="none" stroke="#2f86f2" stroke-width="1.3" stroke-linecap="round" stroke-linejoin="round"/></svg>
<svg style="left:635px;top:82px" width="10" height="12"><path d="M7.0 2.4 L3.0 6.6 L7.0 10.8" fill="none" stroke="#1e7ae6" stroke-width="1.7" stroke-linecap="round" stroke-linejoin="round"/></svg>
<svg style="left:1783.30px;top:80.70px;" width="14" height="14" viewBox="0 0 14 14"><path d="M1.2 1.2 L12.8 12.8 M12.8 1.2 L1.2 12.8" stroke="#1a6fd6" stroke-width="1.7" fill="none" stroke-linecap="round"/></svg>
<svg style="left:1845.00px;top:79.70px;" width="14.4" height="16.2" viewBox="0 0 16 18"><g fill="none" stroke="#2a7de0" stroke-width="1.4" stroke-linejoin="round"><path d="M1.4 1.6 H11.2 L14.6 5 V16.4 H1.4 Z"/><path d="M3.6 1.8 V4 H10 V1.8"/><circle cx="8" cy="10" r="2.2"/></g></svg>
<svg style="left:1562.40px;top:801.60px;" width="16" height="16" viewBox="0 0 16 16"><path d="M1.6 1.6 L14.4 14.4 M14.4 1.6 L1.6 14.4" stroke="#222" stroke-width="1.3" fill="none"/></svg>
<svg style="left:1766.24px;top:800.22px;" width="16.32" height="18.36" viewBox="0 0 16 18"><g fill="none" stroke="#747474" stroke-width="1.15" stroke-linejoin="round"><path d="M1.4 1.6 H11.2 L14.6 5 V16.4 H1.4 Z"/><path d="M3.6 1.8 V4 H10 V1.8"/><circle cx="8" cy="10" r="2.2"/></g></svg>
<svg style="left:1770px;top:816px" width="22" height="27" viewBox="0 0 22 27"><path d="M7.6 2.2 C7.6 0.8 9.8 0.8 9.8 2.2 V10.4 C9.8 8.6 12.2 8.6 12.2 10.4 V11 C12.2 9.4 14.6 9.4 14.6 11 V11.8 C14.6 10.4 17 10.4 17 11.8 V17.4 C17 22 15 24.2 11.6 24.2 C8.4 24.2 7 22.6 5.2 19.8 L2.4 15.4 C1.6 14 3.4 12.8 4.6 14 L7.6 17 Z" fill="#fff" stroke="#333" stroke-width="1" stroke-linejoin="round"/><path d="M9.8 10.4 V13.4 M12.2 11 V13.4 M14.6 11.8 V13.6" stroke="#333" stroke-width=".9" fill="none"/></svg>
</body></html>
